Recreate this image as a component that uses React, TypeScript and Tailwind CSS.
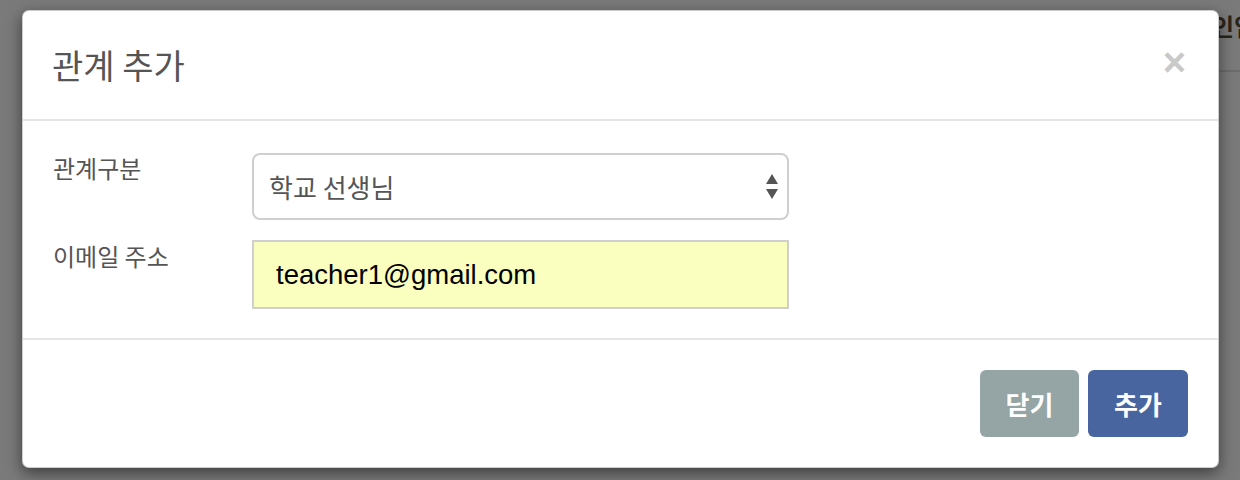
const ko = "font-['Noto_Sans_CJK_KR','Noto_Sans',sans-serif]"

function SelectArrows() {
  return (
    <svg width="12" height="26" viewBox="0 0 12 26" className="text-[#555]" aria-hidden="true">
      <path d="M6 0 L12 10 L0 10 Z" fill="currentColor" />
      <path d="M0 15 L12 15 L6 25 Z" fill="currentColor" />
    </svg>
  )
}

export default function App() {
  return (
    <div className="relative h-[480px] w-[1240px] overflow-hidden bg-[#7a7a7a] pl-[22px] pt-[10px]">
      {/* page behind the overlay, cut off by the window edge */}
      <div className={`absolute left-[1212px] top-[14px] whitespace-nowrap text-[24px] font-bold leading-none text-[#2b2418] ${ko}`}>
        인입
      </div>
      <div className="absolute left-[1218px] top-[70px] h-[2px] w-[30px] bg-[#6c6c6c]" />

      <div className="relative w-[1197px] rounded-[7px] border border-black/20 bg-white shadow-[0_5px_15px_rgba(0,0,0,0.5)]">
        <div className="flex h-[110px] items-center justify-between border-b-2 border-[#e5e5e5] pl-[29px] pr-[32px]">
          <h4 className={`text-[34px] font-normal leading-none text-[#555] ${ko}`}>관계 추가</h4>
          <button
            type="button"
            className="mb-[6px] font-['Liberation_Sans',sans-serif] text-[40px] font-bold leading-none text-[#c9c9c9]"
            aria-label="Close"
          >
            ×
          </button>
        </div>

        <div className="flex flex-col gap-[20px] px-[30px] pb-[29px] pt-[32px]">
          <div className="flex items-start">
            <label className={`w-[199px] text-[24px] leading-[30px] text-[#555] ${ko}`}>관계구분</label>
            <div className="flex h-[67px] w-[537px] items-center justify-between rounded-[8px] border-2 border-[#cfcfcf] bg-white pl-[15px] pr-[9px]">
              <span className={`text-[26px] leading-none text-[#555] ${ko}`}>학교 선생님</span>
              <SelectArrows />
            </div>
          </div>
          <div className="flex items-start">
            <label className={`w-[199px] pt-[1px] text-[24px] leading-[30px] text-[#555] ${ko}`}>이메일 주소</label>
            <div className="flex h-[69px] w-[537px] items-center border-2 border-[#cfcfcf] bg-[#fafebe] pl-[22px]">
              <span className="font-['Liberation_Sans',sans-serif] text-[27.5px] leading-none text-black">
                teacher1@gmail.com
              </span>
            </div>
          </div>
        </div>

        <div className="flex justify-end gap-[9px] border-t-2 border-[#e5e5e5] px-[30px] pb-[30px] pt-[30px]">
          <button
            type="button"
            className={`h-[67px] w-[99px] rounded-[6px] bg-[#95a5a6] text-[26px] font-bold text-white ${ko}`}
          >
            닫기
          </button>
          <button
            type="button"
            className={`h-[67px] w-[100px] rounded-[6px] bg-[#4865a0] text-[26px] font-bold text-white ${ko}`}
          >
            추가
          </button>
        </div>
      </div>
    </div>
  )
}
